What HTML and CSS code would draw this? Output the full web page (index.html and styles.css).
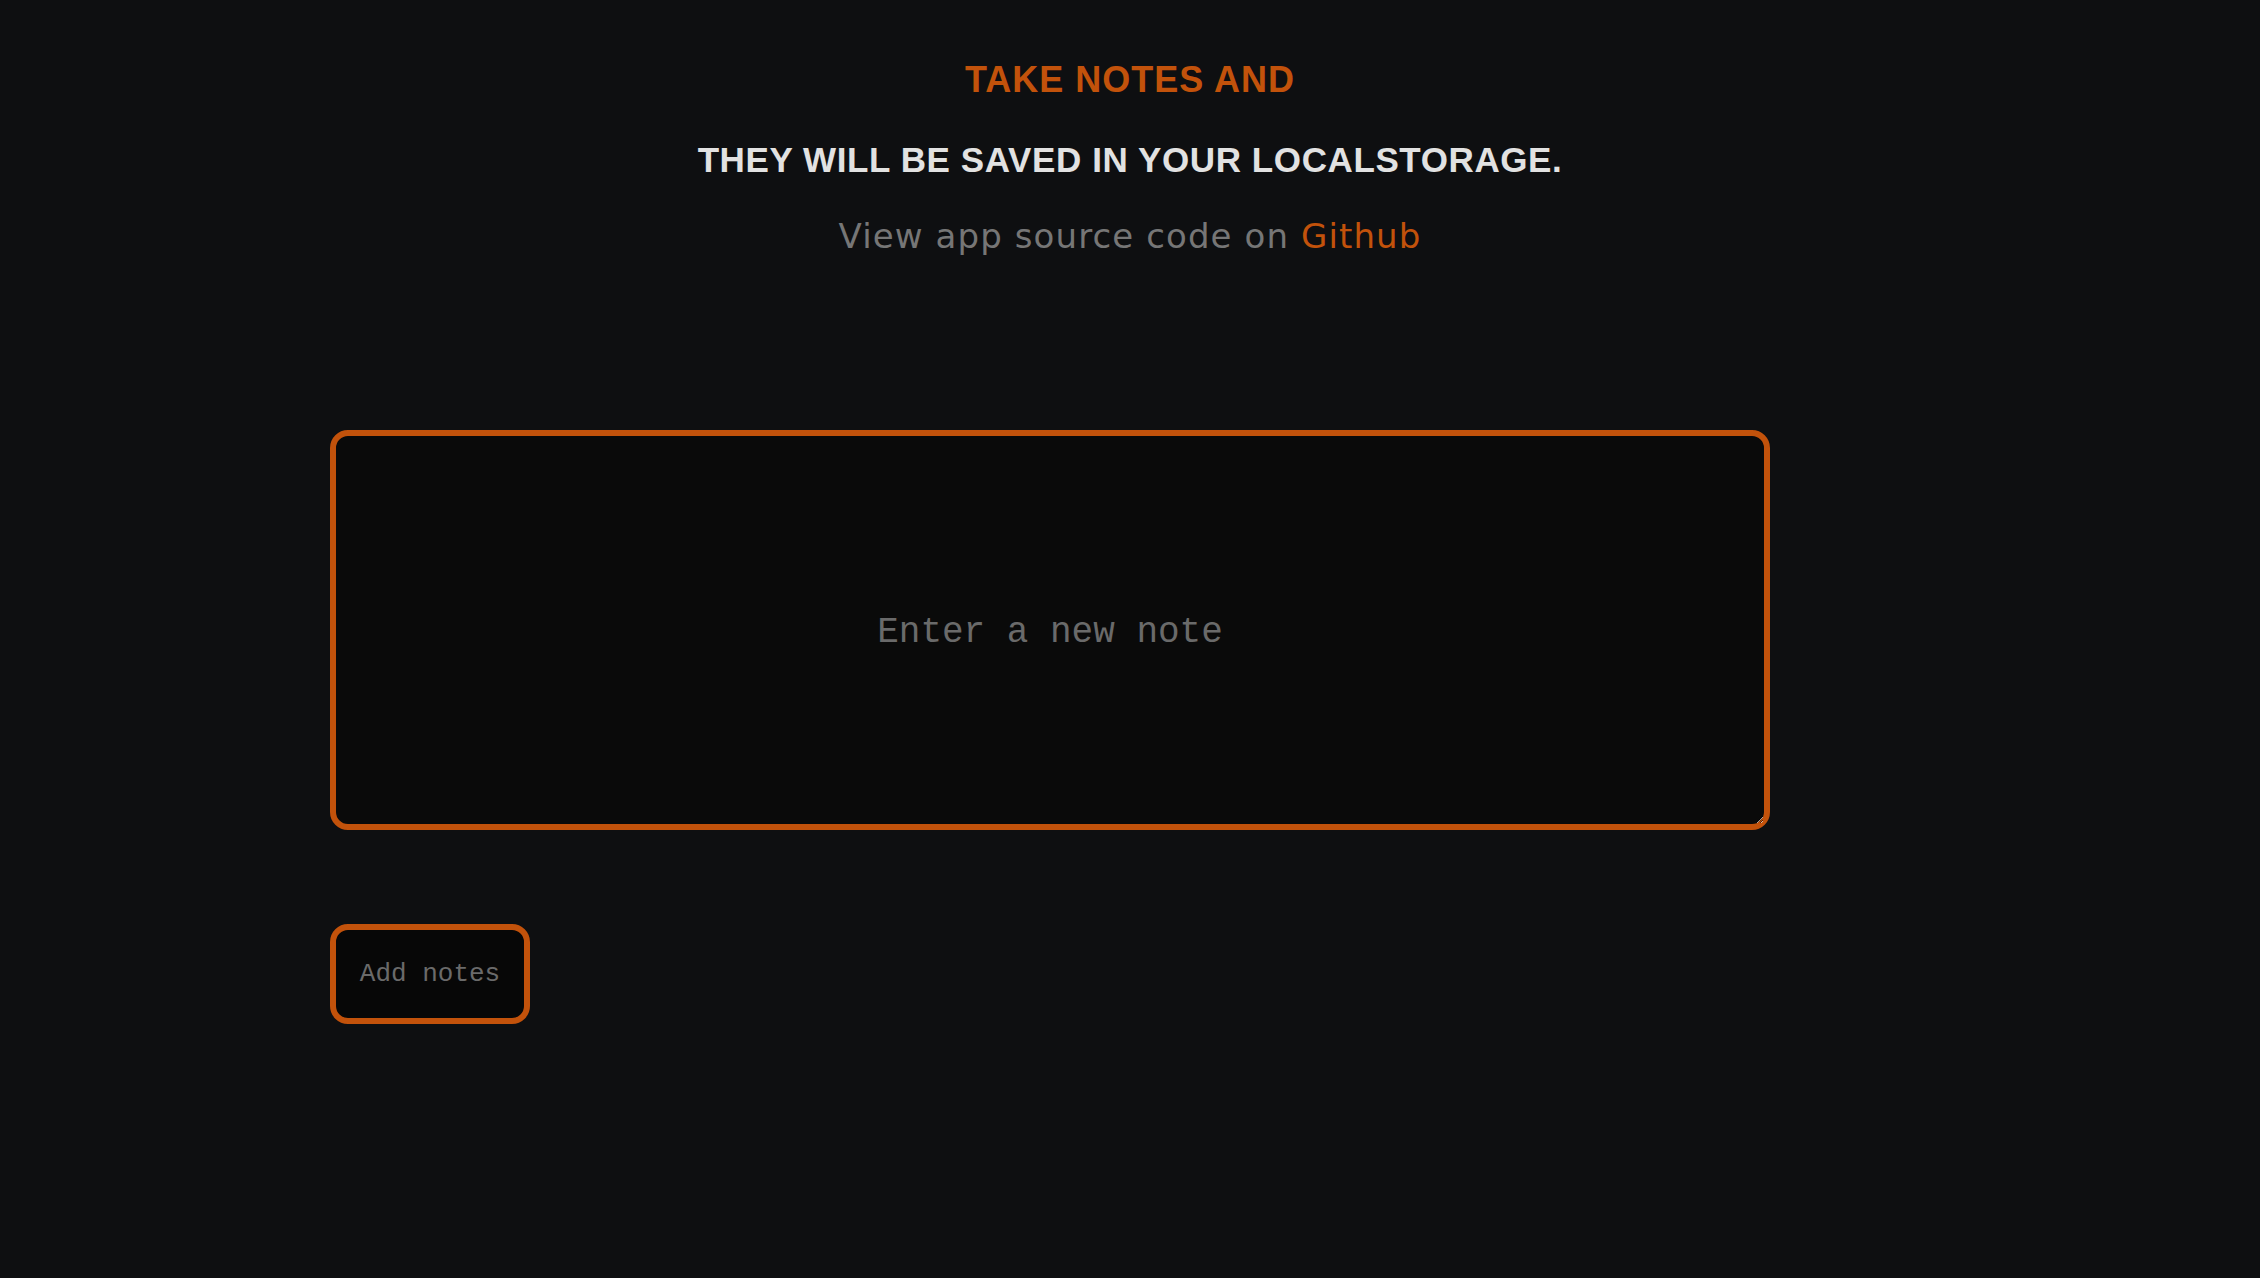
FILE: index.html
```html
<!DOCTYPE html>
<html lang="en">
<head>
<meta charset="utf-8">
<title>Notes</title>
<link rel="stylesheet" href="styles.css">
</head>
<body>
<header class="header">
  <h1 class="title">TAKE NOTES AND</h1>
  <h2 class="subtitle">THEY WILL BE SAVED IN YOUR LOCALSTORAGE.</h2>
  <p class="source">View app source code on <a class="source-link" href="#">Github</a></p>
</header>
<main class="main">
  <textarea class="note-input" placeholder="Enter a new note"></textarea>
  <button class="add-btn" type="button">Add notes</button>
</main>
</body>
</html>
```

FILE: styles.css
```css
html, body {
  margin: 0;
  padding: 0;
  background: #0e0f11;
}
body {
  min-height: 1278px;
  font-family: "Liberation Sans", Arial, sans-serif;
}
.header {
  text-align: center;
  padding-top: 60px;
}
.title {
  margin: 0;
  font-size: 36px;
  line-height: 40px;
  font-weight: 700;
  letter-spacing: 1px;
  color: #c2520b;
}
.subtitle {
  margin: 40px 0 0;
  font-size: 35px;
  line-height: 40px;
  font-weight: 700;
  letter-spacing: 0.6px;
  color: #e2e2e2;
}
.source {
  margin: 36px 0 0;
  font-family: "DejaVu Sans", Verdana, sans-serif;
  font-size: 34px;
  line-height: 40px;
  letter-spacing: 1.1px;
  color: #767676;
}
.source-link {
  color: #c2520b;
  text-decoration: none;
}
.main {
  width: 1600px;
  margin: 174px auto 0;
  display: flex;
  flex-direction: column;
  align-items: flex-start;
  gap: 94px;
}
.note-input {
  box-sizing: border-box;
  width: 1440px;
  height: 400px;
  margin: 0;
  padding: 175px 20px 0;
  border: 6px solid #c2520b;
  border-radius: 18px;
  background: #0a0a0a;
  color: #cfcfcf;
  font-family: "Liberation Mono", "Courier New", monospace;
  font-size: 36px;
  line-height: 44px;
  text-align: center;
  outline: none;
  display: block;
}
.note-input::placeholder {
  color: #6a6a6a;
}
.add-btn {
  box-sizing: border-box;
  width: 200px;
  height: 100px;
  margin: 0;
  padding: 0;
  border: 6px solid #c2520b;
  border-radius: 18px;
  background: #070707;
  color: #6a6a6a;
  font-family: "Liberation Mono", "Courier New", monospace;
  font-size: 26px;
  cursor: pointer;
}
```
